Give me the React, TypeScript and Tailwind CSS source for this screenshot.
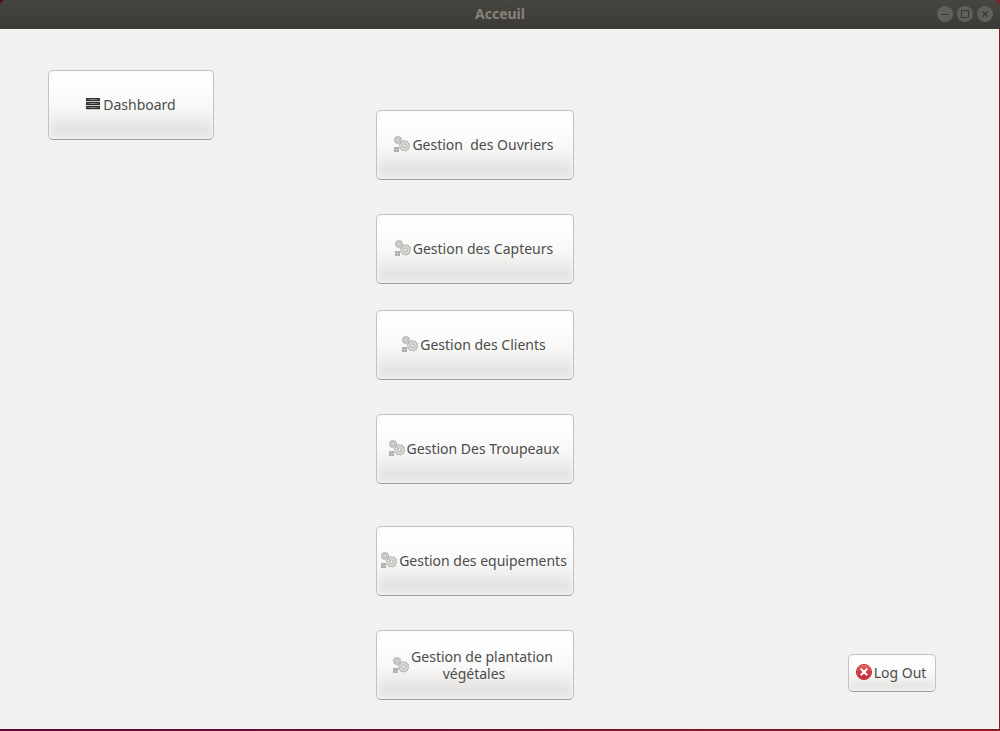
import type { ReactNode } from "react";

function Gear({ cx, cy, r, teeth, hole }: { cx: number; cy: number; r: number; teeth: number; hole: number }) {
  const points: string[] = [];
  const steps = teeth * 4;
  for (let i = 0; i < steps; i++) {
    const angle = ((i + 0.5) / steps) * Math.PI * 2;
    const radius = i % 4 < 2 ? r : r - 0.8;
    points.push(`${(cx + radius * Math.cos(angle)).toFixed(2)},${(cy + radius * Math.sin(angle)).toFixed(2)}`);
  }
  return (
    <g>
      <polygon points={points.join(" ")} fill="#d6d6d5" stroke="#9c9c9b" strokeWidth="0.7" />
      <circle cx={cx} cy={cy} r={hole} fill="#ececec" stroke="#a8a8a7" strokeWidth="0.8" />
    </g>
  );
}

function GearsIcon() {
  return (
    <svg className="size-4 shrink-0" viewBox="0 0 16 16" aria-hidden="true">
      <Gear cx={4} cy={4} r={3.9} teeth={8} hole={1.5} />
      <Gear cx={10.6} cy={9.8} r={5.4} teeth={10} hole={1.8} />
      <rect x="0.5" y="11.5" width="4" height="4" fill="#cfcfce" stroke="#b3b3b2" strokeWidth="1" />
      <path d="M0.5 11.5l4 4M4.5 11.5l-4 4" stroke="#999998" strokeWidth="0.8" />
    </svg>
  );
}

function MenuIcon() {
  return (
    <svg className="h-4 w-[14px] shrink-0" viewBox="0 0 14 16" aria-hidden="true">
      <defs>
        <linearGradient id="bar-fill" x1="0" y1="0" x2="1" y2="0">
          <stop offset="0" stopColor="#4a4d4a" />
          <stop offset="0.5" stopColor="#9a9d9a" />
          <stop offset="1" stopColor="#4a4d4a" />
        </linearGradient>
      </defs>
      {[2, 6, 10].map((y) => (
        <g key={y}>
          <rect x="0" y={y} width="14" height="3" rx="0.5" fill="#2b2e2b" />
          <rect x="1" y={y + 1} width="12" height="1" fill="url(#bar-fill)" />
          <rect x="0" y={y + 3} width="14" height="1" fill="#c9cac9" />
        </g>
      ))}
    </svg>
  );
}

function StopIcon() {
  return (
    <svg className="size-4 shrink-0" viewBox="0 0 16 16" aria-hidden="true">
      <defs>
        <linearGradient id="stop-fill" x1="0" y1="0" x2="0" y2="1">
          <stop offset="0" stopColor="#ee6d5c" />
          <stop offset="0.5" stopColor="#d6303b" />
          <stop offset="1" stopColor="#bd1c38" />
        </linearGradient>
      </defs>
      <circle cx="8" cy="8" r="7.5" fill="url(#stop-fill)" stroke="#b02a35" />
      <circle cx="8" cy="8" r="6.5" fill="none" stroke="#f08d83" strokeOpacity="0.5" strokeWidth="0.8" />
      <path d="M4.8 4.8l6.4 6.4M11.2 4.8l-6.4 6.4" stroke="#fff" strokeWidth="2.3" />
    </svg>
  );
}

function PushButton({ icon, children, className }: { icon: ReactNode; children: ReactNode; className: string }) {
  return (
    <button
      type="button"
      className={`flex items-center justify-center rounded-[5px] border border-[#c6c2be] border-b-[#9c9a98] bg-linear-to-b from-white from-20% via-[#f7f7f6] via-55% to-[#e5e4e2] to-85% text-center text-[#4c4c4c] shadow-[inset_0_0_8px_0_#f8f8f8] ${className}`}
    >
      {icon}
      {children}
    </button>
  );
}

function WindowControl({ label, children }: { label: string; children: ReactNode }) {
  return (
    <button type="button" aria-label={label} className="size-4 rounded-full bg-[#615f5a]">
      <svg className="size-4" viewBox="0 0 16 16" fill="none" stroke="#3a3935" aria-hidden="true">
        {children}
      </svg>
    </button>
  );
}

const sections = [
  { label: "Gestion  des Ouvriers", space: "" },
  { label: "Gestion des Capteurs", space: "mt-[34px]" },
  { label: "Gestion des Clients", space: "mt-[26px]" },
  { label: "Gestion Des Troupeaux", space: "mt-[34px]" },
  { label: "Gestion des equipements", space: "mt-[42px]" },
];

export default function App() {
  return (
    <div className="flex min-h-screen flex-col bg-linear-to-r from-[#5c0538] to-[#8c1a20] pb-0.5 font-['Noto_Sans',sans-serif] text-[14px] leading-[17px]">
      <header className="grid h-[29px] grid-cols-[1fr_auto_1fr] items-center rounded-t-md bg-linear-to-b from-[#46453f] to-[#3b3a36] px-[7px] pb-px">
        <h1 className="col-start-2 pb-0.5 font-bold text-[#87837c]">Acceuil</h1>
        <div className="flex justify-end gap-1">
          <WindowControl label="Réduire">
            <path d="M4 8.5h8" />
          </WindowControl>
          <WindowControl label="Agrandir">
            <rect x="4.5" y="4.5" width="7" height="7" />
          </WindowControl>
          <WindowControl label="Fermer">
            <path d="M5.3 5.3l5.4 5.4M10.7 5.3l-5.4 5.4" strokeWidth="1.3" />
          </WindowControl>
        </div>
      </header>
      <main className="mr-px grid grow grid-cols-[328fr_198px_362fr] bg-[#f2f1ef] pr-[63px] pb-[29px] pl-12">
        <div className="pt-[41px]">
          <PushButton icon={<MenuIcon />} className="h-[70px] w-[166px] gap-[3px] pb-0.5">
            Dashboard
          </PushButton>
        </div>
        <nav className="flex flex-col pt-[81px]">
          {sections.map(({ label, space }) => (
            <PushButton key={label} icon={<GearsIcon />} className={`h-[70px] w-full gap-0.5 pr-0.5 pb-0.5 ${space}`}>
              <span className="whitespace-pre">{label}</span>
            </PushButton>
          ))}
          <PushButton icon={<GearsIcon />} className="mt-[34px] h-[70px] w-full gap-0.5 pr-1">
            <span>
              Gestion de plantation
              <span className="block pr-4">végétales</span>
            </span>
          </PushButton>
        </nav>
        <div className="flex items-end justify-end pb-2">
          <PushButton icon={<StopIcon />} className="h-[38px] w-[88px] gap-0.5 pr-0.5 pb-0.5">
            Log Out
          </PushButton>
        </div>
      </main>
    </div>
  );
}
